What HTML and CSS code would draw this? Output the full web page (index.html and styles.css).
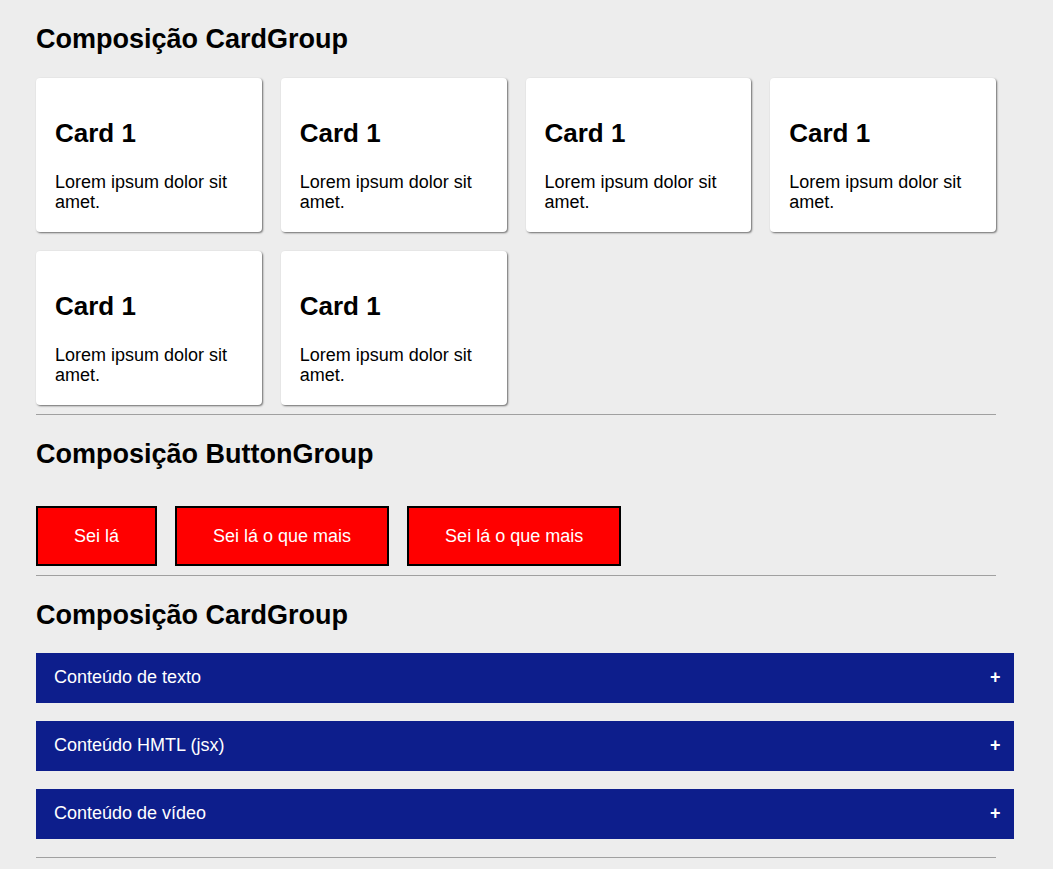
FILE: index.html
```html
<!DOCTYPE html>
<html lang="pt-BR">
<head>
<meta charset="utf-8">
<title>Composição</title>
<link rel="stylesheet" href="styles.css">
</head>
<body>
<main class="page">
  <h2 class="section-title">Composição CardGroup</h2>
  <div class="card-group">
    <div class="card"><h3 class="card-title">Card 1</h3><p class="card-text">Lorem ipsum dolor sit amet.</p></div>
    <div class="card"><h3 class="card-title">Card 1</h3><p class="card-text">Lorem ipsum dolor sit amet.</p></div>
    <div class="card"><h3 class="card-title">Card 1</h3><p class="card-text">Lorem ipsum dolor sit amet.</p></div>
    <div class="card"><h3 class="card-title">Card 1</h3><p class="card-text">Lorem ipsum dolor sit amet.</p></div>
    <div class="card"><h3 class="card-title">Card 1</h3><p class="card-text">Lorem ipsum dolor sit amet.</p></div>
    <div class="card"><h3 class="card-title">Card 1</h3><p class="card-text">Lorem ipsum dolor sit amet.</p></div>
  </div>
  <hr class="divider">
  <h2 class="section-title">Composição ButtonGroup</h2>
  <div class="button-group">
    <button class="btn">Sei lá</button>
    <button class="btn">Sei lá o que mais</button>
    <button class="btn">Sei lá o que mais</button>
  </div>
  <hr class="divider">
  <h2 class="section-title">Composição CardGroup</h2>
  <div class="accordion">
    <div class="acc-item"><span class="acc-label">Conteúdo de texto</span><span class="acc-icon">+</span></div>
    <div class="acc-item"><span class="acc-label">Conteúdo HMTL (jsx)</span><span class="acc-icon">+</span></div>
    <div class="acc-item"><span class="acc-label">Conteúdo de vídeo</span><span class="acc-icon">+</span></div>
  </div>
  <hr class="divider">
</main>
</body>
</html>
```
FILE: styles.css
```css
html, body {
  margin: 0;
  padding: 0;
  background: #ededed;
}
body {
  font-family: "Liberation Sans", Arial, sans-serif;
  font-size: 18px;
  color: #000;
}
.page {
  width: 960px;
  padding: 0 36px 40px;
}
.section-title {
  font-size: 27px;
  font-weight: bold;
  margin: 24px 0 0;
  line-height: 31px;
}
.card-group {
  display: grid;
  grid-template-columns: repeat(4, 1fr);
  gap: 19px;
  margin-top: 23.4px;
}
.card {
  background: #fff;
  border-radius: 4px;
  box-shadow: 1px 1px 2px rgba(0, 0, 0, 0.55);
  padding: 18px 19px 20px;
  height: 154px;
  box-sizing: border-box;
}
.card-title {
  font-size: 26px;
  font-weight: bold;
  line-height: 30px;
  margin: 22px 0 24px;
}
.card-text {
  margin: 0;
  line-height: 20px;
}
.divider {
  border: 0;
  border-top: 1px solid #a0a0a0;
  margin: 9px 0;
  height: 0;
}
.button-group {
  display: flex;
  gap: 18px;
  margin-top: 36px;
}
.btn {
  font-family: "Liberation Sans", Arial, sans-serif;
  font-size: 18px;
  line-height: 20px;
  color: #fff;
  background: #ff0000;
  border: 2px solid #000;
  padding: 18px 36px;
  height: 60px;
  box-sizing: border-box;
}
.accordion {
  display: flex;
  flex-direction: column;
  gap: 18px;
  margin-top: 21.4px;
  margin-right: -18px;
  margin-bottom: 18px;
}
.acc-item {
  height: 50px;
  box-sizing: border-box;
  background: #0d1e8c;
  color: #fff;
  display: flex;
  align-items: center;
  justify-content: space-between;
  padding: 0 13.5px 0 18px;
}
.acc-label {
  font-size: 18px;
}
.acc-icon {
  font-size: 18px;
  font-weight: bold;
}
.accordion + .divider {
  margin-top: 18px;
}
```
